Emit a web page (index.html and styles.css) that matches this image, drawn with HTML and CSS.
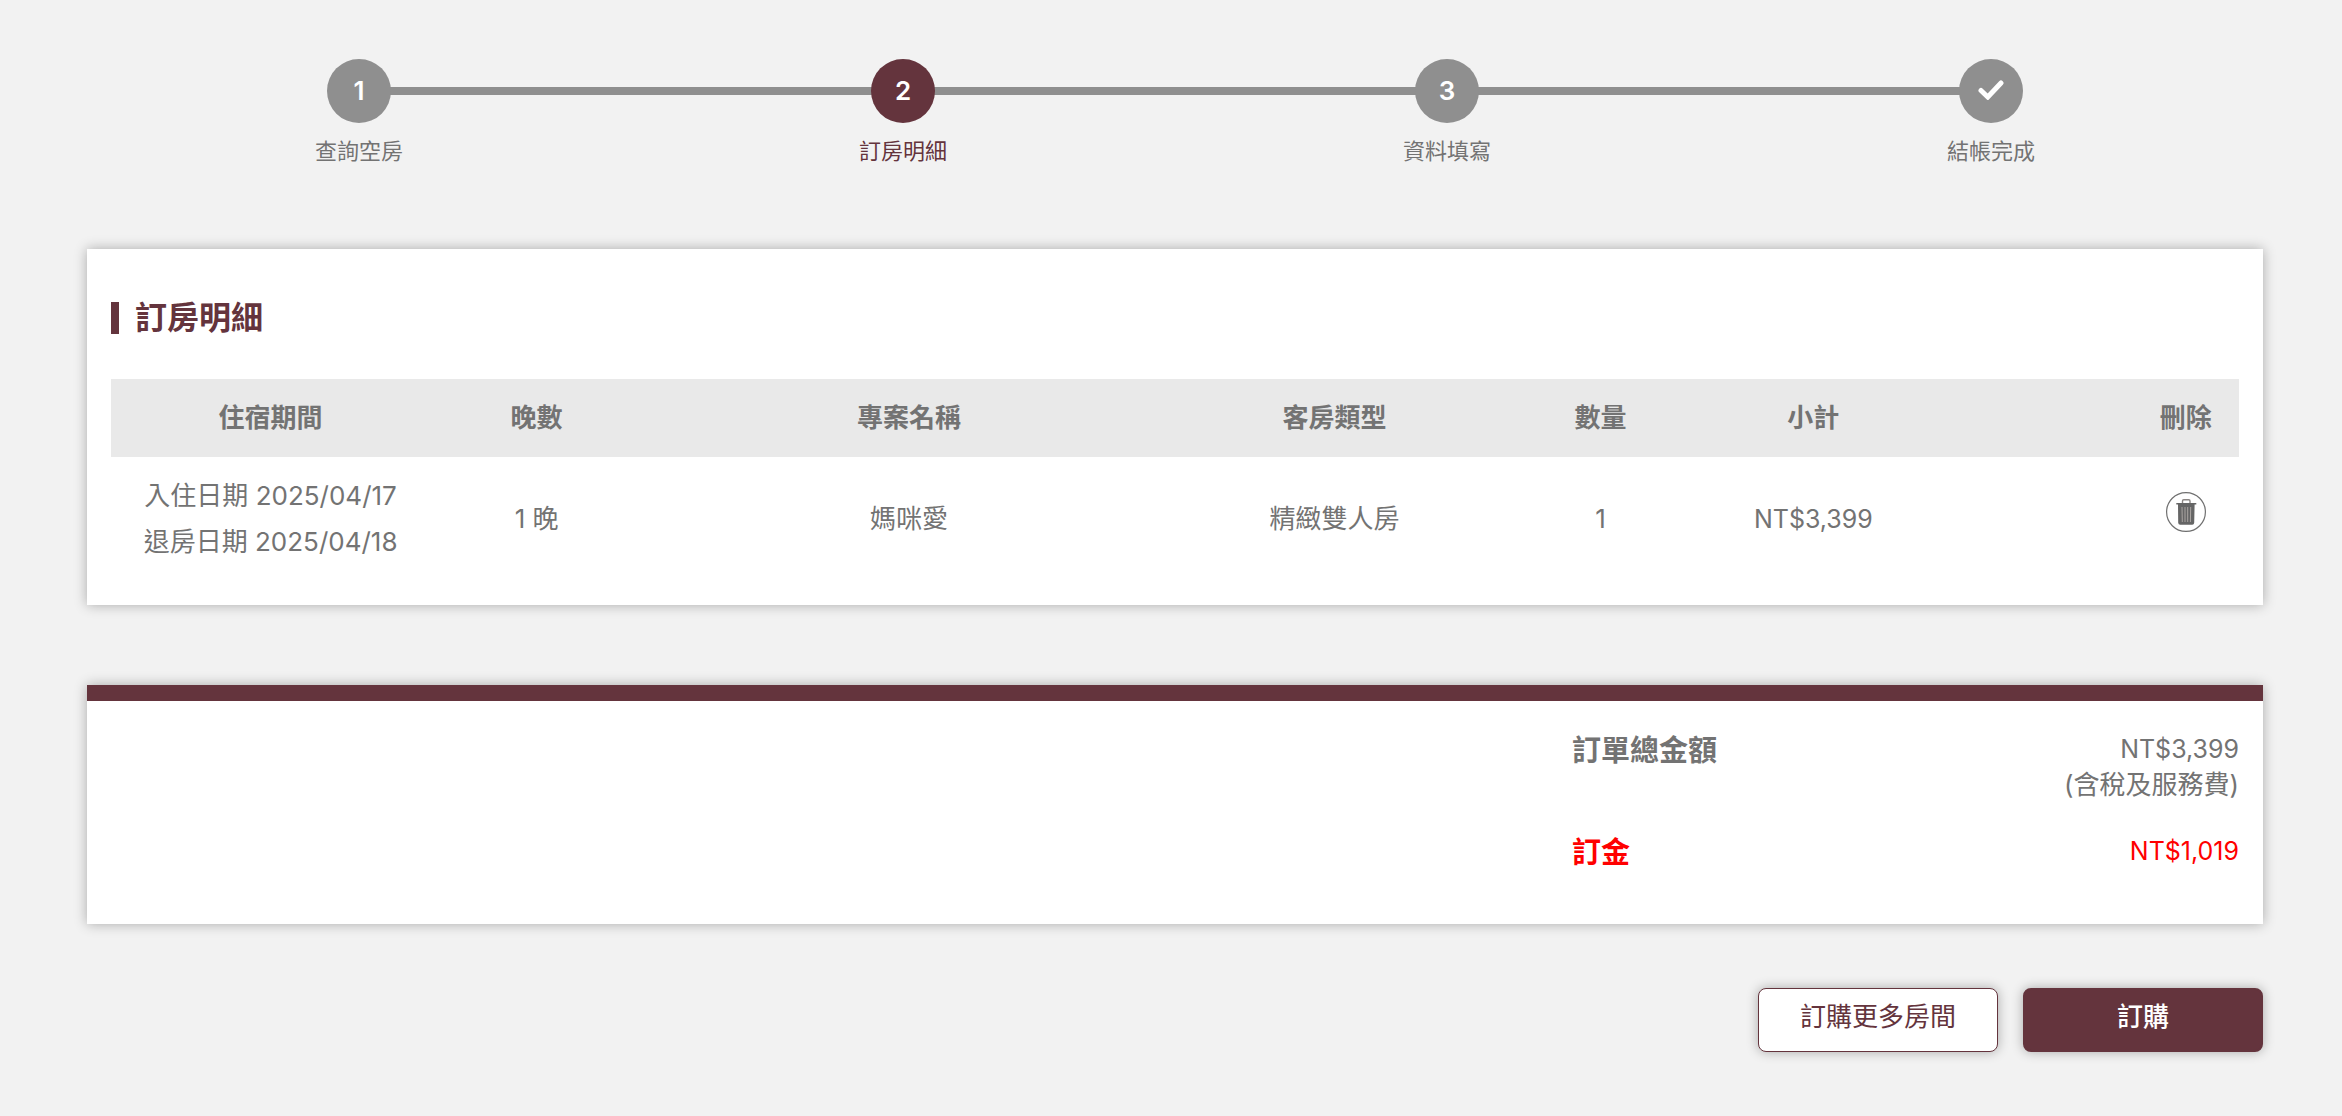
FILE: index.html
```
<!DOCTYPE html>
<html lang="zh-Hant">
<head>
<meta charset="utf-8">
<meta name="viewport" content="width=device-width, initial-scale=1">
<title>訂房明細</title>
<link rel="stylesheet" href="styles.css">
</head>
<body>
<main class="page">
  <ol class="steps">
    <li class="step"><span class="step-dot">1</span><span class="step-name">查詢空房</span></li>
    <li class="step step-active" aria-current="step"><span class="step-dot">2</span><span class="step-name">訂房明細</span></li>
    <li class="step"><span class="step-dot">3</span><span class="step-name">資料填寫</span></li>
    <li class="step"><span class="step-dot"><svg class="check" viewBox="0 0 26 20" aria-hidden="true"><path d="M3 10.500 9.800 17 23 3"/></svg></span><span class="step-name">結帳完成</span></li>
  </ol>

  <section class="card details">
    <h1 class="title">訂房明細</h1>
    <table class="rooms">
      <colgroup>
        <col class="w15"><col class="w10"><col class="w25"><col class="w15"><col class="w10"><col class="w10"><col class="w10"><col class="w5">
      </colgroup>
      <thead>
        <tr><th scope="col">住宿期間</th><th scope="col">晚數</th><th scope="col">專案名稱</th><th scope="col">客房類型</th><th scope="col">數量</th><th scope="col">小計</th><td></td><th scope="col">刪除</th></tr>
      </thead>
      <tbody>
        <tr>
          <td>入住日期 2025/04/17<br>退房日期 2025/04/18</td>
          <td>1 晚</td>
          <td>媽咪愛</td>
          <td>精緻雙人房</td>
          <td>1</td>
          <td class="price">NT$3,399</td>
          <td></td>
          <td>
            <button class="delete" type="button" aria-label="刪除">
              <svg class="trash" viewBox="0 0 40 40" aria-hidden="true">
                <circle cx="20" cy="20" r="19.400" fill="none" stroke="#707070" stroke-width="1.200"/>
                <path d="M16.500 11V9q0-1.200 1.200-1.200h5.100q1.200 0 1.200 1.200v2" fill="none" stroke="#8a8583" stroke-width="1.400"/>
                <path d="M10.300 11h20v1.600h-1.700l-.4 18.200q-.1 2-2 2h-12q-1.900 0-2-2L12 12.600h-1.700z" fill="#656565"/>
                <path d="M16 15l.3 15M19 15v15M21.700 15v15M24.700 15l-.3 15" fill="none" stroke="#aaa5a2" stroke-width="1"/>
              </svg>
            </button>
          </td>
        </tr>
      </tbody>
    </table>
  </section>

  <section class="card summary">
    <dl class="totals">
      <dt>訂單總金額</dt>
      <dd><span class="price">NT$3,399</span><br>(含稅及服務費)</dd>
      <dt class="deposit">訂金</dt>
      <dd class="deposit"><span class="price">NT$1,019</span></dd>
    </dl>
  </section>

  <div class="actions">
    <button class="btn btn-outline" type="button">訂購更多房間</button>
    <button class="btn btn-solid" type="button">訂購</button>
  </div>
</main>
</body>
</html>
```
FILE: styles.css
```
:root {
  --brand: #64343d;
  --text: #737373;
  --line: #8f8f8f;
  --shadow: 0 0 12px rgba(0, 0, 0, .3);
}

* {
  box-sizing: border-box;
}

body {
  margin: 0;
  background: #f2f2f2;
  color: var(--text);
  font-family: Inter, "Noto Sans CJK TC", sans-serif;
  font-size: 26px;
}

.page {
  padding: 59px 79px 64px 87px;
}

/* progress */
.steps {
  display: grid;
  grid-template-columns: repeat(4, 1fr);
  margin: 0 0 80px;
  padding: 0;
  list-style: none;
}

.step {
  position: relative;
  display: flex;
  flex-direction: column;
  align-items: center;
  gap: 10px;
}

.step + .step::before {
  content: "";
  position: absolute;
  top: 28px;
  right: 50%;
  width: 100%;
  height: 8px;
  background: var(--line);
}

.step-dot {
  position: relative;
  z-index: 1;
  display: flex;
  align-items: center;
  justify-content: center;
  width: 64px;
  height: 64px;
  padding-bottom: 2px;
  border-radius: 50%;
  background: var(--line);
  color: #fff;
  font-weight: 600;
}

.step-name {
  font-size: 22px;
  line-height: 36px;
}

.step-active .step-dot {
  background: var(--brand);
}

.step-active .step-name {
  color: var(--brand);
}

.check {
  width: 26px;
  height: 20px;
  fill: none;
  stroke: #fff;
  stroke-width: 5;
  stroke-linecap: round;
}

/* cards */
.card {
  padding: 24px;
  background: #fff;
  box-shadow: var(--shadow);
}

.details {
  margin-bottom: 80px;
  padding-top: 53px;
}

.title {
  margin: 0 0 45px;
  padding-left: 16px;
  border-left: 8px solid var(--brand);
  color: var(--brand);
  font-size: 32px;
  font-weight: 700;
  line-height: 32px;
}

.rooms {
  width: 100%;
  border-collapse: collapse;
  table-layout: fixed;
  line-height: 46px;
  text-align: center;
}

.w5 { width: 5%; }
.w10 { width: 10%; }
.w15 { width: 15%; }
.w25 { width: 25%; }

.rooms th,
.rooms td {
  padding: 16px 0;
}

.rooms thead {
  background: #e9e9e9;
}

.rooms th {
  font-weight: 700;
}

.price {
  font-size: 25px;
}

.delete {
  padding: 0;
  border: 0;
  background: none;
  cursor: pointer;
}

.trash {
  display: block;
  width: 40px;
  height: 40px;
}

/* totals */
.summary {
  margin-bottom: 64px;
  border-top: 16px solid var(--brand);
}

.totals {
  display: grid;
  grid-template-columns: auto 1fr;
  row-gap: 30px;
  width: 32%;
  margin: 6px 0 27px auto;
  padding-left: 14px;
  line-height: 36px;
}

.totals dt {
  font-size: 29px;
  font-weight: 700;
  line-height: 40px;
}

.totals dd {
  margin: 0;
  text-align: right;
}

.totals .deposit {
  color: #f00;
}

/* buttons */
.actions {
  display: flex;
  justify-content: flex-end;
  gap: 25px;
}

.btn {
  width: 240px;
  height: 64px;
  padding: 0 0 6px;
  border: 2px solid var(--brand);
  border-radius: 8px;
  box-shadow: var(--shadow);
  font: 500 26px/36px Inter, "Noto Sans CJK TC", sans-serif;
  cursor: pointer;
}

.btn-outline {
  border-width: 1px;
  background: #fff;
  color: var(--brand);
  font-weight: 400;
}

.btn-solid {
  background: var(--brand);
  color: #fff;
}
```
